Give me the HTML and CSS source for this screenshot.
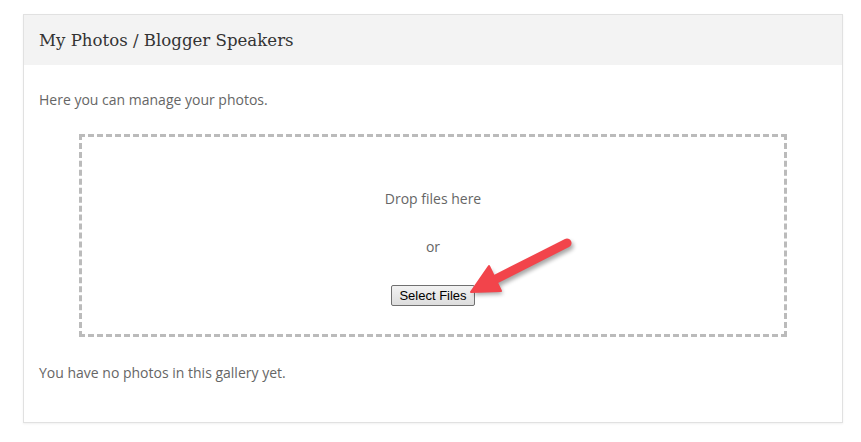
FILE: index.html
```html
<!DOCTYPE html>
<html>
<head>
<meta charset="utf-8">
<link rel="stylesheet" href="styles.css">
</head>
<body>
<div class="card">
  <div class="card-header"><h2 class="title">My Photos / Blogger Speakers</h2></div>
  <div class="card-body">
    <p class="intro">Here you can manage your photos.</p>
    <div class="dropzone">
      <p class="drop-text">Drop files here</p>
      <p class="or">or</p>
      <button class="select-btn" type="button">Select Files</button>
    </div>
    <p class="empty">You have no photos in this gallery yet.</p>
  </div>
</div>
<svg class="arrow" width="861" height="442" viewBox="0 0 861 442">
  <defs>
    <filter id="sh" x="-20%" y="-20%" width="140%" height="140%">
      <feGaussianBlur stdDeviation="2"/>
    </filter>
  </defs>
  <g transform="translate(2,3)" opacity="0.35" filter="url(#sh)">
    <line x1="567" y1="243" x2="492" y2="281" stroke="#000" stroke-width="9" stroke-linecap="round"/>
    <polygon points="471,292 489,266 501,291" fill="#000"/>
  </g>
  <line x1="567" y1="243" x2="492" y2="281" stroke="#f2444b" stroke-width="9" stroke-linecap="round"/>
  <polygon points="471,292 489,266 501,291" fill="#f2444b" stroke="#f2444b" stroke-width="2" stroke-linejoin="round"/>
</svg>
</body>
</html>
```
FILE: styles.css
```css
html, body {
  margin: 0;
  padding: 0;
  background: #ffffff;
}
body {
  width: 861px;
  height: 442px;
  position: relative;
  overflow: hidden;
  font-family: "Open Sans", "Liberation Sans", sans-serif;
}
.card {
  margin: 14px 0 0 23px;
  width: 818px;
  height: 407px;
  border: 1px solid #e1e1e1;
  box-shadow: 0 1px 2px rgba(0,0,0,0.06);
  background: #fff;
}
.card-header {
  background: #f3f3f3;
  height: 50px;
  display: flex;
  align-items: center;
  padding-left: 15px;
}
.title {
  margin: 0;
  font-family: "DejaVu Serif", "Liberation Serif", serif;
  font-weight: normal;
  font-size: 16.6px;
  color: #333;
  padding-top: 1px;
}
.card-body {
  padding: 0 15px;
}
.intro {
  margin: 0;
  padding-top: 25px;
  font-size: 14px;
  line-height: 20px;
  color: #666;
}
.dropzone {
  width: 702px;
  height: 197px;
  margin: 24px auto 0;
  border: 3px dashed #bbbbbb;
  display: flex;
  flex-direction: column;
  align-items: center;
}
.drop-text {
  margin: 52px 0 0;
  font-size: 14px;
  line-height: 20px;
  color: #666;
}
.or {
  margin: 28px 0 0;
  font-size: 14px;
  line-height: 20px;
  color: #666;
}
.select-btn {
  margin-top: 28px;
  height: 21px;
  padding: 0 7px;
  font-family: "Liberation Sans", Arial, sans-serif;
  font-size: 13px;
  color: #000;
  border: 1px solid #707070;
  border-radius: 2px;
  background: linear-gradient(#f2f2f2, #dddddd);
}
.empty {
  margin: 0;
  padding-top: 26px;
  font-size: 14px;
  line-height: 20px;
  color: #666;
}
.arrow {
  position: absolute;
  left: 0;
  top: 0;
  pointer-events: none;
}
```
